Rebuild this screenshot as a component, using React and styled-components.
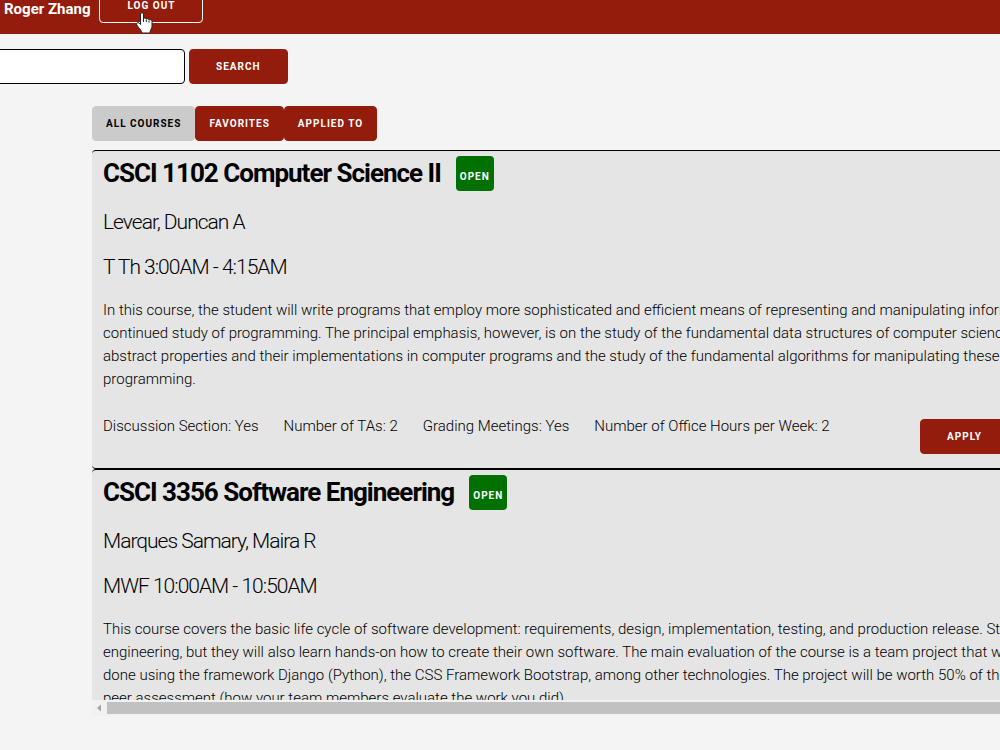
import React from "react";
import styled, { createGlobalStyle, css } from "styled-components";

const GlobalStyle = createGlobalStyle`
  * { box-sizing: border-box; }
  html, body { margin: 0; background: #f4f4f4; }
  body {
    font-family: Roboto, "Liberation Sans", sans-serif;
    font-size: 15px;
    font-weight: 300;
    line-height: 23px;
    color: #000;
    overflow-x: hidden;
  }
`;

const red = "#941c0c";

const Header = styled.header`
  display: flex;
  align-items: flex-end;
  gap: 9px;
  height: 34px;
  padding: 0 4px 11px;
  background: ${red};
  color: #fff;
`;

const UserName = styled.span`
  font-size: 15px;
  font-weight: 700;
  line-height: 23px;
  padding-bottom: 2px;
`;

const Button = styled.button`
  flex: none;
  height: 35px;
  padding: 1px ${(p) => (p.$compact ? 13 : 26)}px 0;
  border: 1px solid ${red};
  border-radius: 4px;
  background: ${red};
  color: #fff;
  font-family: inherit;
  font-size: 10px;
  font-weight: 700;
  line-height: 32px;
  letter-spacing: 1px;
  text-transform: uppercase;
  white-space: nowrap;
  cursor: pointer;
  ${(p) => p.$outline && css`
    padding: 1px 27px 0;
    border-color: #fff;
  `}
  ${(p) => p.$active && css`
    background: #cbcbcb;
    border-color: #cbcbcb;
    color: #000;
  `}
`;

const LogOut = styled.div`
  position: relative;
  display: flex;
`;

const Pointer = styled.svg`
  position: absolute;
  left: 36px;
  top: 24px;
`;

const SearchForm = styled.form`
  display: flex;
  gap: 4px;
  padding-top: 15px;
`;

const SearchInput = styled.input`
  width: 193px;
  height: 35px;
  margin-left: -8px;
  padding: 0 10px;
  border: 1px solid #000;
  border-radius: 4px;
  background: #fff;
  font: inherit;
`;

const Main = styled.main`
  margin: 22px 0 0 92px;
`;

const Tabs = styled.nav`
  display: flex;
  margin-bottom: 9px;
`;

const CourseList = styled.section`
  height: 550px;
  overflow: hidden;
`;

const Card = styled.article`
  height: 319px;
  margin-right: -20px;
  padding: 5px 11px 0;
  border: 1px solid #000;
  border-width: 1px 0;
  border-radius: 4px;
  background: #e5e5e5;
`;

const TitleRow = styled.div`
  display: flex;
  gap: 15px;
  height: 35px;
`;

const Title = styled.h3`
  margin: 0;
  font-size: 26px;
  font-weight: 700;
  line-height: 35px;
  letter-spacing: -1px;
  white-space: nowrap;
`;

const Badge = styled.span`
  padding: 3px 4px 0;
  border-radius: 4px;
  background: #007000;
  color: #fff;
  font-size: 10px;
  font-weight: 700;
  line-height: 35px;
  letter-spacing: 1px;
`;

const Detail = styled.h5`
  margin: 18px 0 0;
  font-size: 21px;
  font-weight: 300;
  line-height: 27px;
  letter-spacing: -1px;
`;

const Description = styled.p`
  margin: 18px 0 0;
  white-space: nowrap;
`;

const Line = styled.span`
  display: block;
`;

const Footer = styled.div`
  display: flex;
  justify-content: space-between;
  align-items: flex-start;
  margin-top: 24px;
`;

const Facts = styled.ul`
  display: flex;
  gap: 25px;
  margin: 0;
  padding: 0;
  list-style: none;
  white-space: nowrap;
`;

const ApplyArea = styled.div`
  padding-top: 4px;
`;

const ScrollBar = styled.div`
  display: flex;
  align-items: center;
  height: 16px;
  background: #f1f1f1;
`;

const ScrollArrow = styled.svg`
  flex: none;
  width: 15px;
  height: 8px;
`;

const ScrollThumb = styled.div`
  flex: 1;
  height: 12px;
  background: #c1c1c1;
`;

const courses = [
  {
    title: "CSCI 1102 Computer Science II",
    teacher: "Levear, Duncan A",
    time: "T Th 3:00AM - 4:15AM",
    lines: [
      "In this course, the student will write programs that employ more sophisticated and efficient means of representing and manipulating information.",
      "continued study of programming. The principal emphasis, however, is on the study of the fundamental data structures of computer science,",
      "abstract properties and their implementations in computer programs and the study of the fundamental algorithms for manipulating these structures",
      "programming.",
    ],
    facts: [
      "Discussion Section: Yes",
      "Number of TAs: 2",
      "Grading Meetings: Yes",
      "Number of Office Hours per Week: 2",
    ],
  },
  {
    title: "CSCI 3356 Software Engineering",
    teacher: "Marques Samary, Maira R",
    time: "MWF 10:00AM - 10:50AM",
    lines: [
      "This course covers the basic life cycle of software development: requirements, design, implementation, testing, and production release. Students",
      "engineering, but they will also learn hands-on how to create their own software. The main evaluation of the course is a team project that will",
      "done using the framework Django (Python), the CSS Framework Bootstrap, among other technologies. The project will be worth 50% of the",
      "peer assessment (how your team members evaluate the work you did).",
    ],
  },
];

function Course({ course }) {
  return (
    <Card>
      <TitleRow>
        <Title>{course.title}</Title>
        <Badge>OPEN</Badge>
      </TitleRow>
      <Detail>{course.teacher}</Detail>
      <Detail>{course.time}</Detail>
      <Description>
        {course.lines.map((line) => (
          <Line key={line}>{line}</Line>
        ))}
      </Description>
      {course.facts && (
        <Footer>
          <Facts>
            {course.facts.map((fact) => (
              <li key={fact}>{fact}</li>
            ))}
          </Facts>
          <ApplyArea>
            <Button type="button">Apply</Button>
          </ApplyArea>
        </Footer>
      )}
    </Card>
  );
}

export default function App() {
  return (
    <>
      <GlobalStyle />
      <Header>
        <UserName>Roger Zhang</UserName>
        <LogOut>
          <Button type="button" $outline>Log out</Button>
          <Pointer width="18" height="22" viewBox="0 0 18 22" aria-hidden="true">
            <path
              d="M5.500 2C5.500.3 8.500.3 8.500 2v4.500c.6-.8 2.600-.5 2.800.5.800-.6 2.500-.2 2.700.8.900-.6 3 0 3 1.700v4.700c0 2.200-1.500 3.400-1.800 5.300-.2 1.200-.8 1.500-1.700 1.500H8.300c-1 0-1.500-.4-1.800-1.300-.5-1.800-3.300-4.200-4.700-6.800-1-1.800 1-3 2.300-1.900L5.500 12.500Z"
              fill="#fff"
              stroke="#222"
              strokeWidth="1"
            />
            <path d="M8.500 6.500v3.500M11.300 7.500V10M14 8.500V10.500" stroke="#222" fill="none" />
          </Pointer>
        </LogOut>
      </Header>
      <SearchForm onSubmit={(e) => e.preventDefault()}>
        <SearchInput type="text" aria-label="Search courses" />
        <Button type="submit">Search</Button>
      </SearchForm>
      <Main>
        <Tabs>
          <Button type="button" $compact $active>All courses</Button>
          <Button type="button" $compact>Favorites</Button>
          <Button type="button" $compact>Applied to</Button>
        </Tabs>
        <CourseList>
          {courses.map((course) => (
            <Course key={course.title} course={course} />
          ))}
        </CourseList>
        <ScrollBar>
          <ScrollArrow viewBox="0 0 15 8" aria-hidden="true">
            <path d="M9 0.500v7L5 4Z" fill="#a3a3a3" />
          </ScrollArrow>
          <ScrollThumb />
        </ScrollBar>
      </Main>
    </>
  );
}
